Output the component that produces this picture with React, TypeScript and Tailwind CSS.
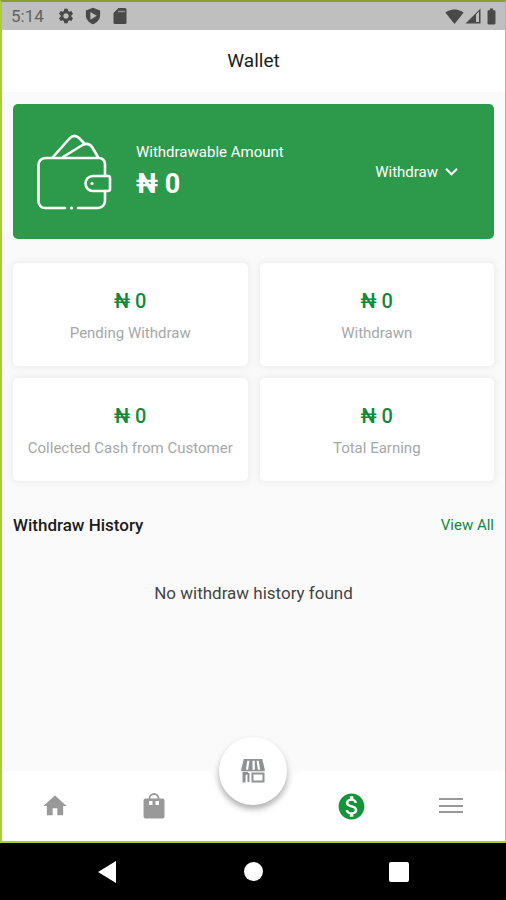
import React from "react";
import {
    MdBatteryFull,
    MdHome,
    MdKeyboardArrowDown,
    MdMonetizationOn,
    MdSettings,
    MdSignalWifi4Bar,
} from "react-icons/md";

const stats = [
    { label: "Pending Withdraw", value: "₦ 0" },
    { label: "Withdrawn", value: "₦ 0" },
    { label: "Collected Cash from Customer", value: "₦ 0" },
    { label: "Total Earning", value: "₦ 0" },
];

const ShieldIcon = () => (
    <svg viewBox="0 0 24 24" className="h-[18px] w-[18px]" aria-hidden>
        <path
            fillRule="evenodd"
            fill="currentColor"
            d="M12 1 2.500 4.500v6.500c0 5.500 4.300 10.200 9.500 12 5.200-1.800 9.500-6.500 9.500-12V4.500zM8.500 6.500v10.500l8.500-5.200z"
        />
    </svg>
);

const SdCardIcon = () => (
    <svg viewBox="0 0 18 18" className="h-[18px] w-[18px]" fill="currentColor" aria-hidden>
        <path d="M7.500 1H14q1.500 0 1.500 1.500v13q0 1.500-1.500 1.500H4q-1.500 0-1.500-1.500V6z" />
        <path d="M7 4.500h7" stroke="#bfbfbf" strokeWidth="1.500" opacity="0.6" />
    </svg>
);

const SignalIcon = () => (
    <svg viewBox="0 0 16 16" className="h-4 w-4" aria-hidden>
        <path fill="currentColor" fillRule="evenodd" d="M15.500.5v15H.5zM11 6.500v7.500h3V3.500z" />
    </svg>
);

const WalletIcon = () => (
    <svg
        viewBox="0 0 76 78"
        className="h-[78px] w-[76px] shrink-0"
        fill="none"
        stroke="white"
        strokeWidth="2.600"
        strokeLinecap="round"
        strokeLinejoin="round"
        aria-hidden
    >
        <path d="M28 75H8a6.500 6.500 0 0 1-6.500-6.500V32A7 7 0 0 1 8 25h54a6 6 0 0 1 6 6v12M68 58v10a7 7 0 0 1-7 7H41" />
        <path d="M16 24 32.500 5.500q5-5 9.500-.5l5 5" />
        <path d="M26 24 45.500 12q6-3 9.500 2l6 10" />
        <path d="M56 43h15q2 0 2 2v11q0 2-2 2H56a7.500 7.500 0 0 1 0-15z" />
        <path d="M55 50.500h.1M34.500 75h.1" strokeWidth="3.200" />
    </svg>
);

const BagIcon = () => (
    <svg viewBox="0 0 22 26" className="h-[26px] w-[22px]" aria-hidden>
        <path
            fill="currentColor"
            fillRule="evenodd"
            d="M2.500 5.500h17Q21.500 5.500 21.500 7.500v16q0 2-2 2h-17q-2 0-2-2v-16q0-2 2-2zM6 8v4h3.500V8zM12.500 8v4H16V8z"
        />
        <path d="M6.500 6.500V5.500a4.500 4.500 0 0 1 9 0v1" fill="none" stroke="currentColor" strokeWidth="1.800" />
    </svg>
);

const StoreIcon = () => (
    <svg viewBox="0 0 26 26" className="h-[26px] w-[26px]" aria-hidden>
        <path
            fill="#8f9294"
            d="M3.500 1h19v1.800h-19zM3.500 2h3.800L5.800 12.500H1zM18.700 2h3.800L25 12.500h-4.800zM9.500 2h3v10.500H8zM14.800 2h1.700l1.500 10.500h-3.200z"
        />
        <path d="M1.500 12.500h23" stroke="#8f9294" strokeWidth="1.500" />
        <path d="M8 16.500h-1q-1.500 0-1.500 1.500v6.500h-3V14h5.500zM8 16.500h1v8" fill="#8f9294" />
        <path d="M12.500 15.500h11v8h-11zM8.500 15v9" fill="none" stroke="#8f9294" strokeWidth="2" />
    </svg>
);

const MenuIcon = () => (
    <svg viewBox="0 0 24 18" className="h-[18px] w-6" fill="currentColor" aria-hidden>
        <path d="M0 1h24v2H0zM0 8h24v2H0zM0 14h24v2H0z" />
    </svg>
);

const StatusBar = () => (
    <div className="flex h-7 items-center justify-between bg-[#bfbfbf] pr-1 pl-[9px] text-[#494949]">
        <div className="flex items-center gap-[9px]">
            <span className="mr-1 text-[17px] leading-5 text-[#626262]">5:14</span>
            <MdSettings size={18} />
            <ShieldIcon />
            <SdCardIcon />
        </div>
        <div className="flex items-center gap-px">
            <MdSignalWifi4Bar size={19} />
            <SignalIcon />
            <MdBatteryFull size={19} />
        </div>
    </div>
);

const BalanceCard = () => (
    <section className="flex h-[135px] items-center rounded-[5px] bg-[#2d9a4b] px-6 text-white">
        <WalletIcon />
        <div className="ml-[23px] flex-1">
            <p className="text-[15px] leading-5">Withdrawable Amount</p>
            <p className="mt-1 text-[27px] leading-9 font-bold">₦ 0</p>
        </div>
        <button type="button" className="mr-1.5 flex items-center gap-px text-[15px] leading-5">
            Withdraw
            <MdKeyboardArrowDown size={25} />
        </button>
    </section>
);

const BottomNav = () => (
    <nav className="relative grid h-[70px] grid-cols-5 bg-white pr-[5px] pl-1 text-[#999]">
        <svg
            viewBox="0 0 112 46"
            className="absolute -top-px left-1/2 h-[46px] w-28 -translate-x-1/2"
            aria-hidden
        >
            <path d="M0 0Q14 1 16 7A41 41 0 0 0 96 7Q98 1 112 0z" fill="#fbfbfb" />
        </svg>
        <button type="button" aria-label="Home" className="grid place-items-center">
            <MdHome size={28} />
        </button>
        <button type="button" aria-label="Orders" className="grid place-items-center">
            <BagIcon />
        </button>
        <div className="relative">
            <button
                type="button"
                aria-label="Store"
                className="absolute -top-[34px] left-1/2 grid h-[68px] w-[68px] -translate-x-1/2 place-items-center rounded-full bg-white shadow-[0_4px_6px_rgba(0,0,0,0.3)]"
            >
                <StoreIcon />
            </button>
        </div>
        <button type="button" aria-label="Wallet" className="grid place-items-center text-[#15953a]">
            <MdMonetizationOn size={31} />
        </button>
        <button type="button" aria-label="Menu" className="grid place-items-center">
            <MenuIcon />
        </button>
    </nav>
);

const SystemNav = () => (
    <div className="flex h-[57px] items-center justify-center gap-[126px] bg-black text-white">
        <button type="button" aria-label="Back">
            <svg viewBox="0 0 20 22" className="h-[22px] w-5" aria-hidden>
                <path d="M18 0v22L0 11z" fill="currentColor" />
            </svg>
        </button>
        <button type="button" aria-label="Home screen" className="h-[19px] w-[19px] rounded-full bg-white" />
        <button type="button" aria-label="Recent apps" className="h-5 w-5 rounded-[2px] bg-white" />
    </div>
);

const App: React.FC = () => (
    <div className="flex min-h-screen flex-col bg-black font-['Roboto',sans-serif]">
        <div className="flex flex-1 flex-col border-2 border-r border-[#a9d02f] border-t-[#8a9f27] bg-[#fafafa]">
            <StatusBar />
            <header className="flex h-[62px] items-center justify-center bg-white">
                <h1 className="text-[19px] leading-6 text-[#1c1c1c]">Wallet</h1>
            </header>

            <main className="flex-1 px-[11px] pt-3">
                <BalanceCard />

                <div className="mt-6 grid grid-cols-2 gap-3">
                    {stats.map((stat) => (
                        <div
                            key={stat.label}
                            className="flex h-[103px] flex-col items-center justify-center gap-2 rounded-[5px] bg-white shadow-[0_0_6px_2px_rgba(0,0,0,0.05)]"
                        >
                            <p className="text-xl leading-7 font-medium text-[#15893a]">{stat.value}</p>
                            <p className="text-[15px] leading-5 text-[#a5a8a8]">{stat.label}</p>
                        </div>
                    ))}
                </div>

                <div className="mt-8 flex items-center justify-between">
                    <h2 className="text-[17px] leading-6 font-medium text-[#1c1c1c]">Withdraw History</h2>
                    <a href="#history" className="text-[15px] leading-6 text-[#15893a]">
                        View All
                    </a>
                </div>
                <p className="mt-11 text-center text-[17px] leading-6 text-[#444]">No withdraw history found</p>
            </main>

            <BottomNav />
        </div>
        <SystemNav />
    </div>
);

export default App;
